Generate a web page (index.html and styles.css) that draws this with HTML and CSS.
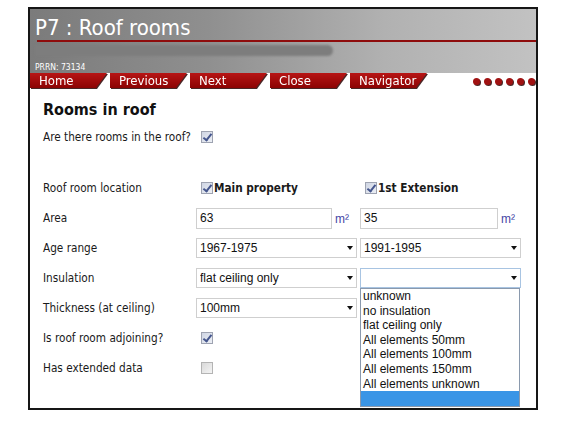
FILE: index.html
```
<!DOCTYPE html>
<html lang="en">
<head>
    <meta charset="UTF-8">
    <meta name="viewport" content="width=device-width, initial-scale=1.0">
    <title>P7 : Roof rooms</title>
    <link rel="stylesheet" href="styles.css">
</head>
<body>
    <div class="frame">
        <header class="banner">
            <h1 class="title">P7 : Roof rooms</h1>
            <div class="rule"></div>
            <div class="address"></div>
            <div class="prrn">PRRN: 73134</div>
        </header>
        <nav class="tabs">
            <a class="tab">Home</a>
            <a class="tab">Previous</a>
            <a class="tab">Next</a>
            <a class="tab">Close</a>
            <a class="tab">Navigator</a>
            <span class="dots"><i></i><i></i><i></i><i></i><i></i><i></i></span>
        </nav>
        <main class="content">
            <h2>Rooms in roof</h2>
            <div class="form">
                <div class="row">
                    <span class="label">Are there rooms in the roof?</span>
                    <span class="cell"><span class="tick on"></span></span>
                </div>
                <div class="spacer"></div>
                <div class="row">
                    <span class="label">Roof room location</span>
                    <span class="cell"><span class="tick on"></span><b>Main property</b></span>
                    <span class="cell"><span class="tick on"></span><b>1st Extension</b></span>
                </div>
                <div class="row">
                    <span class="label">Area</span>
                    <span class="cell"><input class="field" type="text" value="63"><span class="unit">m²</span></span>
                    <span class="cell"><input class="field wide" type="text" value="35"><span class="unit">m²</span></span>
                </div>
                <div class="row">
                    <span class="label">Age range</span>
                    <span class="cell"><span class="pick"><select><option>1967-1975</option></select></span></span>
                    <span class="cell"><span class="pick"><select><option>1991-1995</option></select></span></span>
                </div>
                <div class="row">
                    <span class="label">Insulation</span>
                    <span class="cell"><span class="pick"><select><option>flat ceiling only</option></select></span></span>
                    <span class="cell open">
                        <span class="pick focus"><select><option></option></select></span>
                        <ul class="listbox">
                            <li>unknown</li>
                            <li>no insulation</li>
                            <li>flat ceiling only</li>
                            <li>All elements 50mm</li>
                            <li>All elements 100mm</li>
                            <li>All elements 150mm</li>
                            <li>All elements unknown</li>
                            <li class="current"></li>
                        </ul>
                    </span>
                </div>
                <div class="row">
                    <span class="label">Thickness (at ceiling)</span>
                    <span class="cell"><span class="pick"><select><option>100mm</option></select></span></span>
                </div>
                <div class="row">
                    <span class="label">Is roof room adjoining?</span>
                    <span class="cell"><span class="tick on"></span></span>
                </div>
                <div class="row">
                    <span class="label">Has extended data</span>
                    <span class="cell"><span class="tick"></span></span>
                </div>
            </div>
        </main>
    </div>
</body>
</html>
```
FILE: styles.css
```
* {
    box-sizing: border-box;
    margin: 0;
    padding: 0;
}
body {
    background: #fff;
    font-family: "DejaVu Sans Condensed", "DejaVu Sans", sans-serif;
    color: #1a1a1a;
}
.frame {
    margin: 7px 0 0 28px;
    width: 510px;
    height: 403px;
    border: 2px solid #161616;
    overflow: hidden;
}
/* grey page banner */
.banner {
    height: 64px;
    padding-top: 7px;
    background: linear-gradient(to right, #7b7b7b 0%, #8f8f8f 35%, #b1b1b1 70%, #c2c2c2 100%);
    .title {
        height: 23px;
        padding-left: 5px;
        font-size: 22px;
        line-height: 23px;
        font-weight: normal;
        color: #fff;
    }
    .rule {
        height: 2px;
        margin: 1px 0 0 7px;
        background: #8e0c0c;
    }
    .address {
        width: 298px;
        height: 11px;
        margin: 3px 0 0 5px;
        border-radius: 0 6px 6px 0;
        background: #7d7d7d;
        filter: blur(1px);
    }
    .prrn {
        margin: 6px 0 0 5px;
        font-size: 8.5px;
        line-height: 10px;
        color: #fff;
    }
}
/* red menu tabs */
.tabs {
    display: flex;
    gap: 3px;
    height: 15px;
    filter: drop-shadow(1px 1px 0 rgba(40, 0, 0, 0.85));
    .tab {
        width: 77px;
        padding-left: 9px;
        font-size: 13px;
        line-height: 15px;
        color: #fff;
        background: linear-gradient(#b71515, #8c0303);
        clip-path: polygon(0 0, 100% 0, calc(100% - 11px) 100%, 0 100%);
    }
    .dots {
        display: flex;
        gap: 4px;
        margin-left: auto;
        padding: 3px 1px 0 0;
        i {
            width: 7px;
            height: 7px;
            margin-top: 2px;
            border-radius: 50%;
            background: #a01212;
        }
    }
}
.content {
    padding: 12px 0 0 13px;
    h2 {
        font-size: 16px;
        line-height: 19px;
        color: #111;
    }
}
.form {
    margin-top: 3px;
    font-size: 11.7px;
    .row {
        display: grid;
        grid-template-columns: 153px 164px 161px;
        align-items: center;
        height: 30px;
    }
    .spacer {
        height: 21px;
    }
    .cell {
        display: flex;
        align-items: center;
        b {
            margin-left: 1px;
            font-size: 11.7px;
        }
    }
    .open {
        position: relative;
    }
}
/* greyed windows style check boxes */
.tick {
    width: 12px;
    height: 12px;
    margin-left: 5px;
    border: 1px solid #9ea3b1;
    background: linear-gradient(135deg, #cfd5e3, #eceff5);
}
.tick.on::after {
    content: "";
    display: block;
    width: 3px;
    height: 7px;
    margin: 0 0 0 3px;
    border: solid #45568d;
    border-width: 0 2px 2px 0;
    transform: rotate(38deg);
}
.tick:not(.on) {
    border-color: #b4b4b4;
    background: linear-gradient(135deg, #d9d9d9, #f4f4f4);
}
.field {
    width: 136px;
    height: 21px;
    padding-left: 3px;
    border: 1px solid #cfcfcf;
    font: 12px "Liberation Sans", Arial, sans-serif;
    color: #111;
    outline: none;
}
.field.wide {
    width: 138px;
}
.unit {
    align-self: flex-start;
    margin: 4px 0 0 3px;
    font: 12px "Liberation Sans", Arial, sans-serif;
    color: #4646a6;
}
.pick {
    position: relative;
    display: block;
    width: 161px;
    select {
        display: block;
        width: 100%;
        height: 20px;
        padding-left: 3px;
        border: 1px solid #cfcfcf;
        background: #fff;
        font: 12px "Liberation Sans", Arial, sans-serif;
        color: #111;
        appearance: none;
        outline: none;
    }
}
.pick::after {
    content: "";
    position: absolute;
    right: 4px;
    top: 8px;
    border: 3px solid transparent;
    border-top: 4px solid #111;
    border-bottom: 0;
}
.pick.focus select {
    border-color: #a8c4e2;
}
/* open drop down list */
.listbox {
    position: absolute;
    left: 0;
    top: 20px;
    width: 160px;
    border: 1px solid #8a99ad;
    background: #fff;
    list-style: none;
    font: 12px "Liberation Sans", Arial, sans-serif;
    color: #111;
    z-index: 2;
    li {
        height: 14.6px;
        padding-left: 2px;
        line-height: 14.6px;
    }
    .current {
        background: #3a95e6;
    }
}
```
